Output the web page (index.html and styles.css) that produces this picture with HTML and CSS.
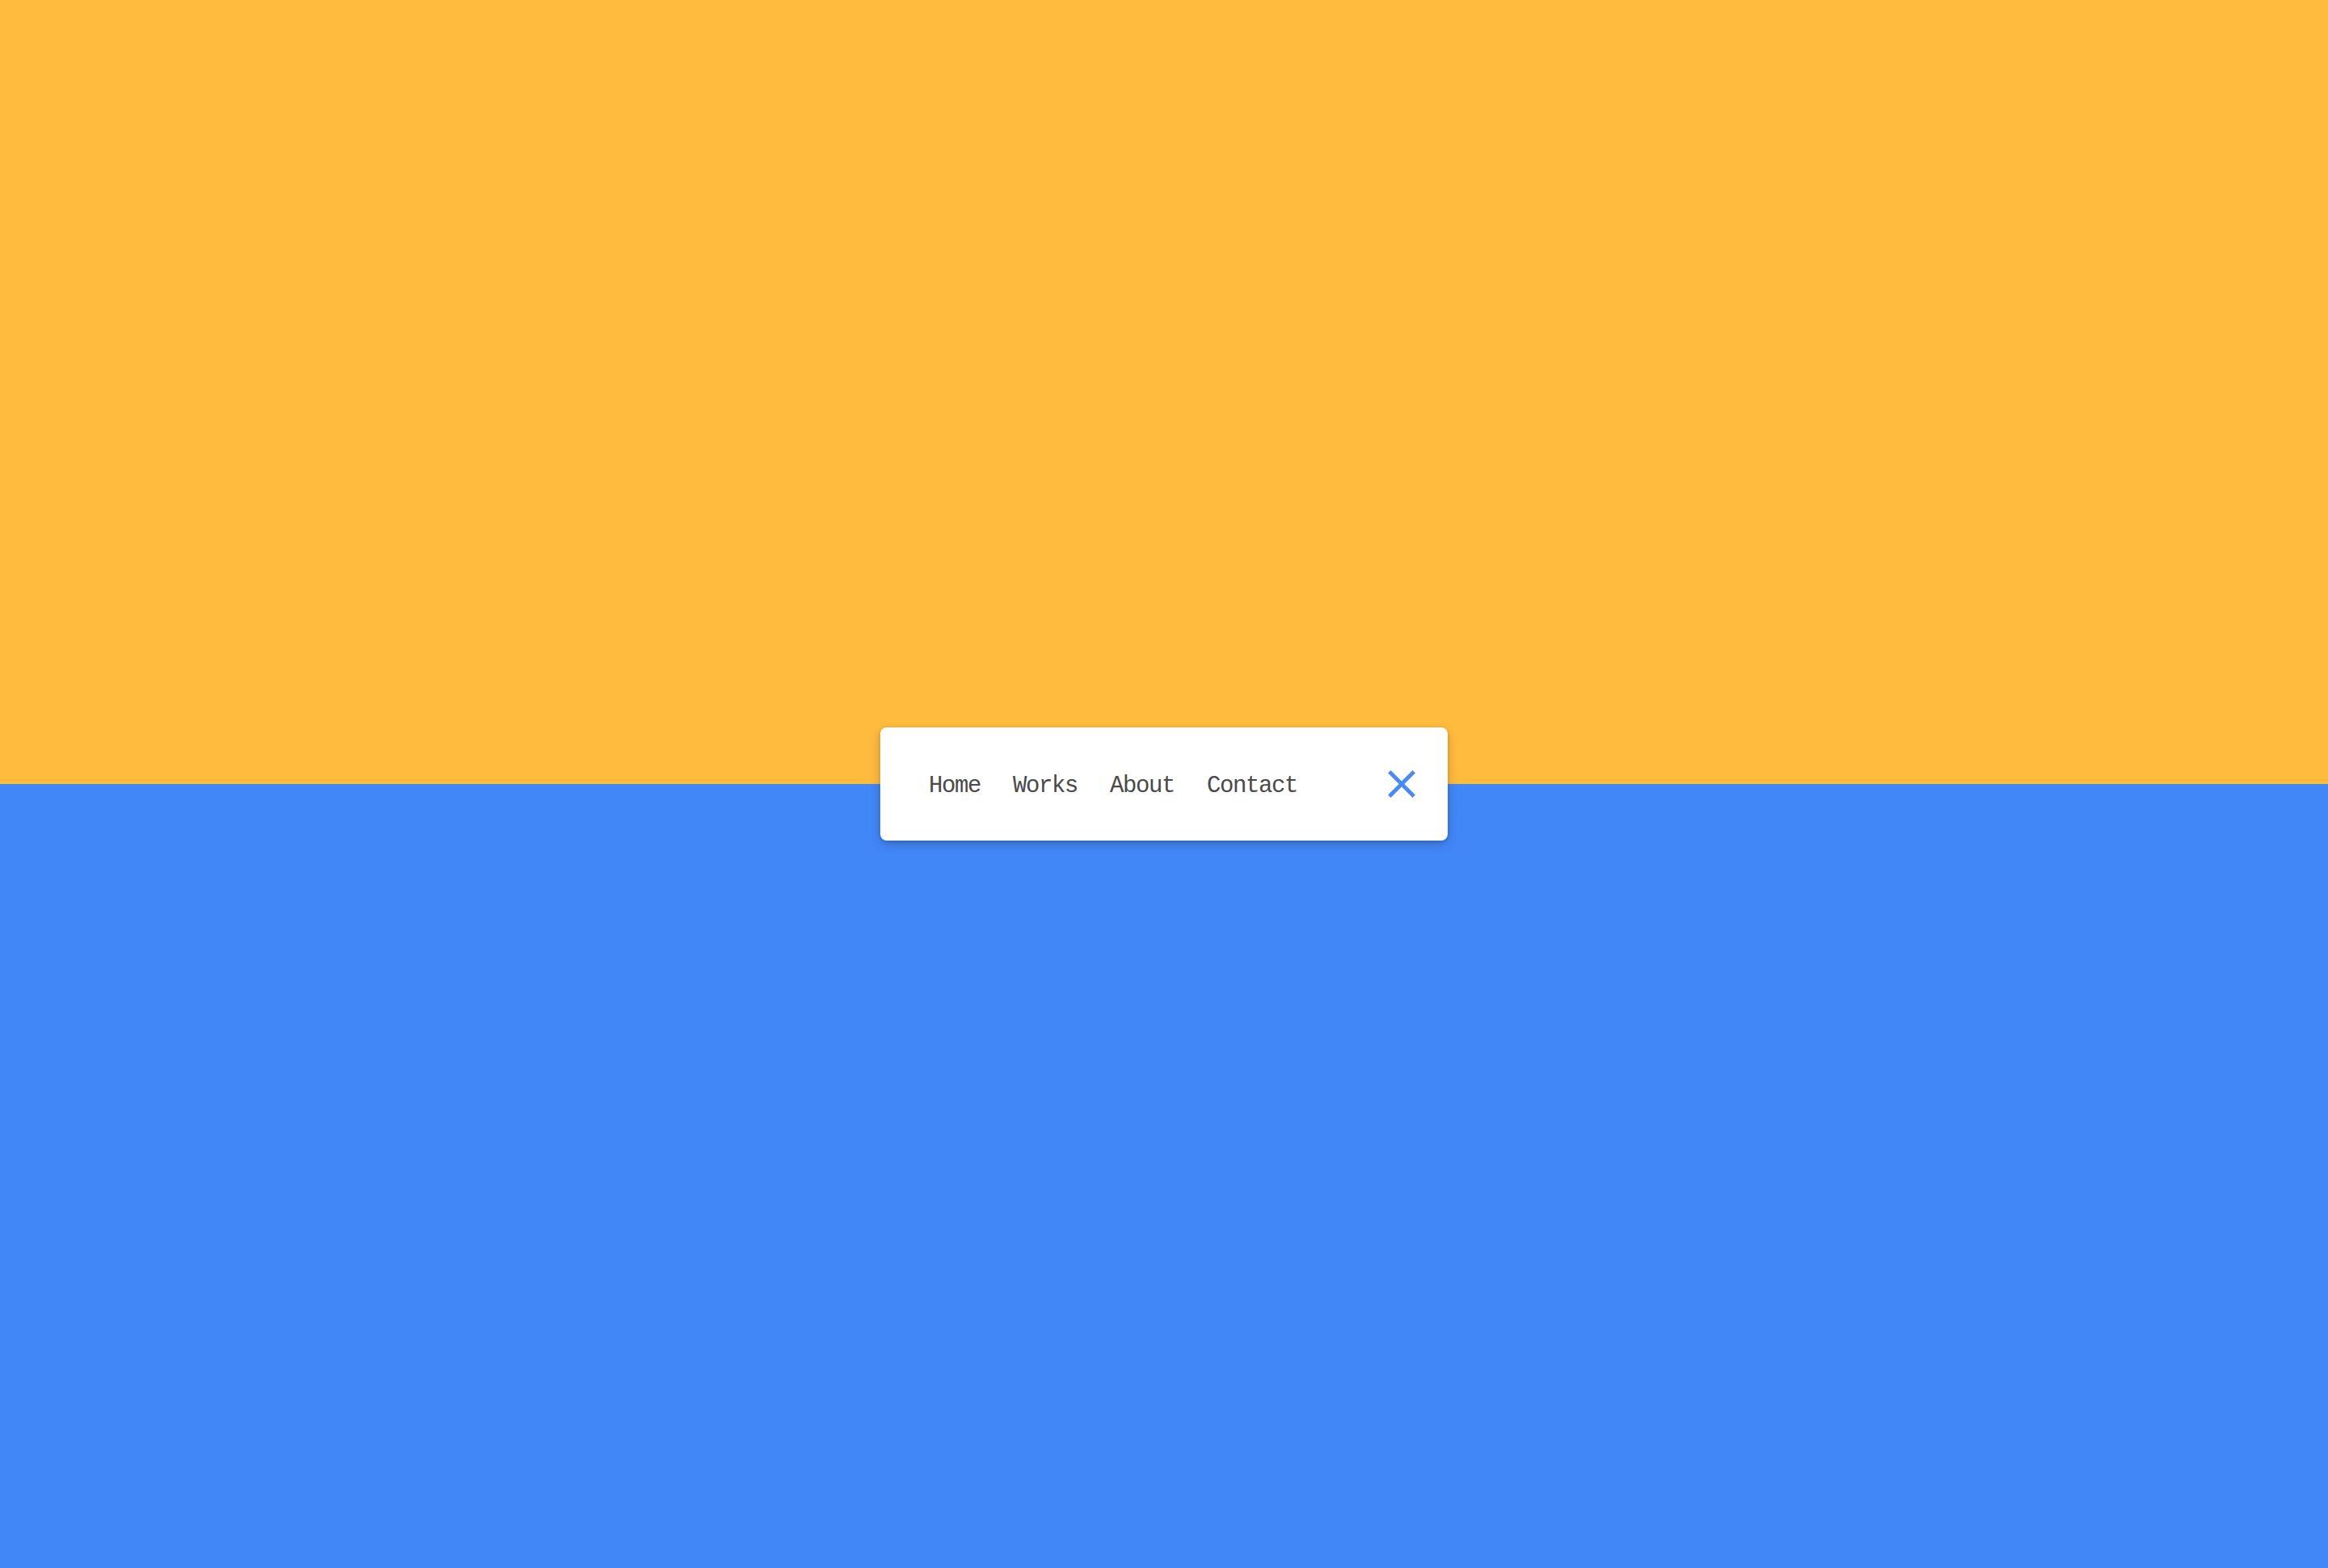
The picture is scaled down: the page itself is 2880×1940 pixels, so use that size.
FILE: index.html
```html
<!DOCTYPE html>
<html lang="en">
<head>
<meta charset="utf-8">
<title>Menu</title>
<link rel="stylesheet" href="styles.css">
</head>
<body>
<div class="page">
  <div class="half half-top"></div>
  <div class="half half-bottom"></div>
  <nav class="menu">
    <ul class="menu-links">
      <li><a class="menu-link" href="#">Home</a></li>
      <li><a class="menu-link" href="#">Works</a></li>
      <li><a class="menu-link" href="#">About</a></li>
      <li><a class="menu-link" href="#">Contact</a></li>
    </ul>
    <button class="menu-close" type="button" aria-label="Close">
      <svg viewBox="0 0 24 24" width="58" height="58"><path fill="currentColor" d="M19 6.41L17.59 5 12 10.59 6.41 5 5 6.41 10.59 12 5 17.59 6.41 19 12 13.41 17.59 19 19 17.59 13.41 12z"/></svg>
    </button>
  </nav>
</div>
</body>
</html>
```

FILE: styles.css
```css
html, body {
  margin: 0;
  padding: 0;
}

body {
  font-family: "Liberation Mono", "DejaVu Sans Mono", monospace;
}

.page {
  display: grid;
  grid-template-columns: 1fr;
  grid-template-rows: 970px 970px;
  width: 100%;
  height: 1940px;
  overflow: hidden;
}

.half-top {
  grid-row: 1;
  grid-column: 1;
  background: #ffbb3e;
}

.half-bottom {
  grid-row: 2;
  grid-column: 1;
  background: #4287f7;
}

.menu {
  grid-row: 1 / 3;
  grid-column: 1;
  place-self: center;
  box-sizing: border-box;
  width: 702px;
  height: 140px;
  padding: 0 28px 0 60px;
  display: flex;
  align-items: center;
  justify-content: space-between;
  background: #ffffff;
  border-radius: 8px;
  box-shadow: 0 4px 12px rgba(0, 0, 0, 0.22), 0 1px 3px rgba(0, 0, 0, 0.12);
}

.menu-links {
  list-style: none;
  margin: 0;
  padding: 0;
  display: flex;
  gap: 40px;
}

.menu-link {
  font-size: 29px;
  letter-spacing: -1.4px;
  color: #4a4a4a;
  text-decoration: none;
  line-height: 1;
  display: block;
  padding-top: 5px;
}

.menu-close {
  border: 0;
  background: none;
  padding: 0;
  margin: 0;
  width: 58px;
  height: 58px;
  color: #4a8af5;
  display: flex;
  align-items: center;
  justify-content: center;
  cursor: pointer;
}

.menu-close svg {
  display: block;
}
```
